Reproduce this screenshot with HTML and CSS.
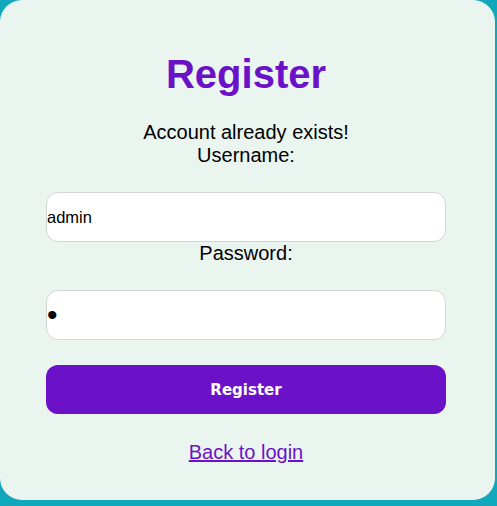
FILE: index.html
```html
<!DOCTYPE html>
<html>
<head>
<meta charset="utf-8">
<link rel="stylesheet" href="styles.css">
</head>
<body>
<div class="card">
  <h1 class="title">Register</h1>
  <p class="msg">Account already exists!</p>
  <label class="label" for="u">Username:</label>
  <input class="field field-first" id="u" type="text" value="admin">
  <label class="label" for="p">Password:</label>
  <input class="field field-second" id="p" type="password" value="a">
  <button class="btn">Register</button>
  <a class="back" href="#">Back to login</a>
</div>
</body>
</html>
```
FILE: styles.css
```css
html, body {
  margin: 0;
  padding: 0;
}
body {
  background: #11a8bb;
  width: 497px;
  height: 506px;
  overflow: hidden;
  font-family: "Liberation Sans", Arial, sans-serif;
}
.card {
  width: 495px;
  height: 500px;
  background: #ebf5f0;
  border-radius: 22px;
  box-sizing: border-box;
  padding-top: 51px;
  padding-right: 3px;
  display: flex;
  flex-direction: column;
  align-items: center;
  text-align: center;
}
.title {
  margin: 0;
  font-size: 40px;
  line-height: 46px;
  font-weight: bold;
  color: #6b12c9;
}
.msg {
  margin: 24px 0 0;
  font-size: 20px;
  line-height: 23px;
  color: #000;
}
.label {
  display: block;
  font-size: 20px;
  line-height: 23px;
  color: #000;
}
.field {
  display: block;
  width: 400px;
  height: 50px;
  box-sizing: border-box;
  margin: 25px 0 0;
  padding: 0;
  border: 1px solid #d3d6d4;
  border-radius: 12px;
  background: #fff;
  font-family: "Liberation Sans", Arial, sans-serif;
  font-size: 16.5px;
  color: #000;
  outline: none;
}
.field-second {
  margin-top: 25px;
  font-size: 30px;
}
.btn {
  display: block;
  width: 400px;
  height: 49px;
  margin: 25px 0 0;
  border: none;
  border-radius: 12px;
  background: #6b12c9;
  color: #fff;
  font-family: "DejaVu Sans", Verdana, sans-serif;
  font-weight: bold;
  font-size: 15px;
}
.back {
  display: block;
  margin-top: 27px;
  font-size: 20px;
  line-height: 23px;
  color: #6b12c9;
  text-decoration: underline;
}
```
